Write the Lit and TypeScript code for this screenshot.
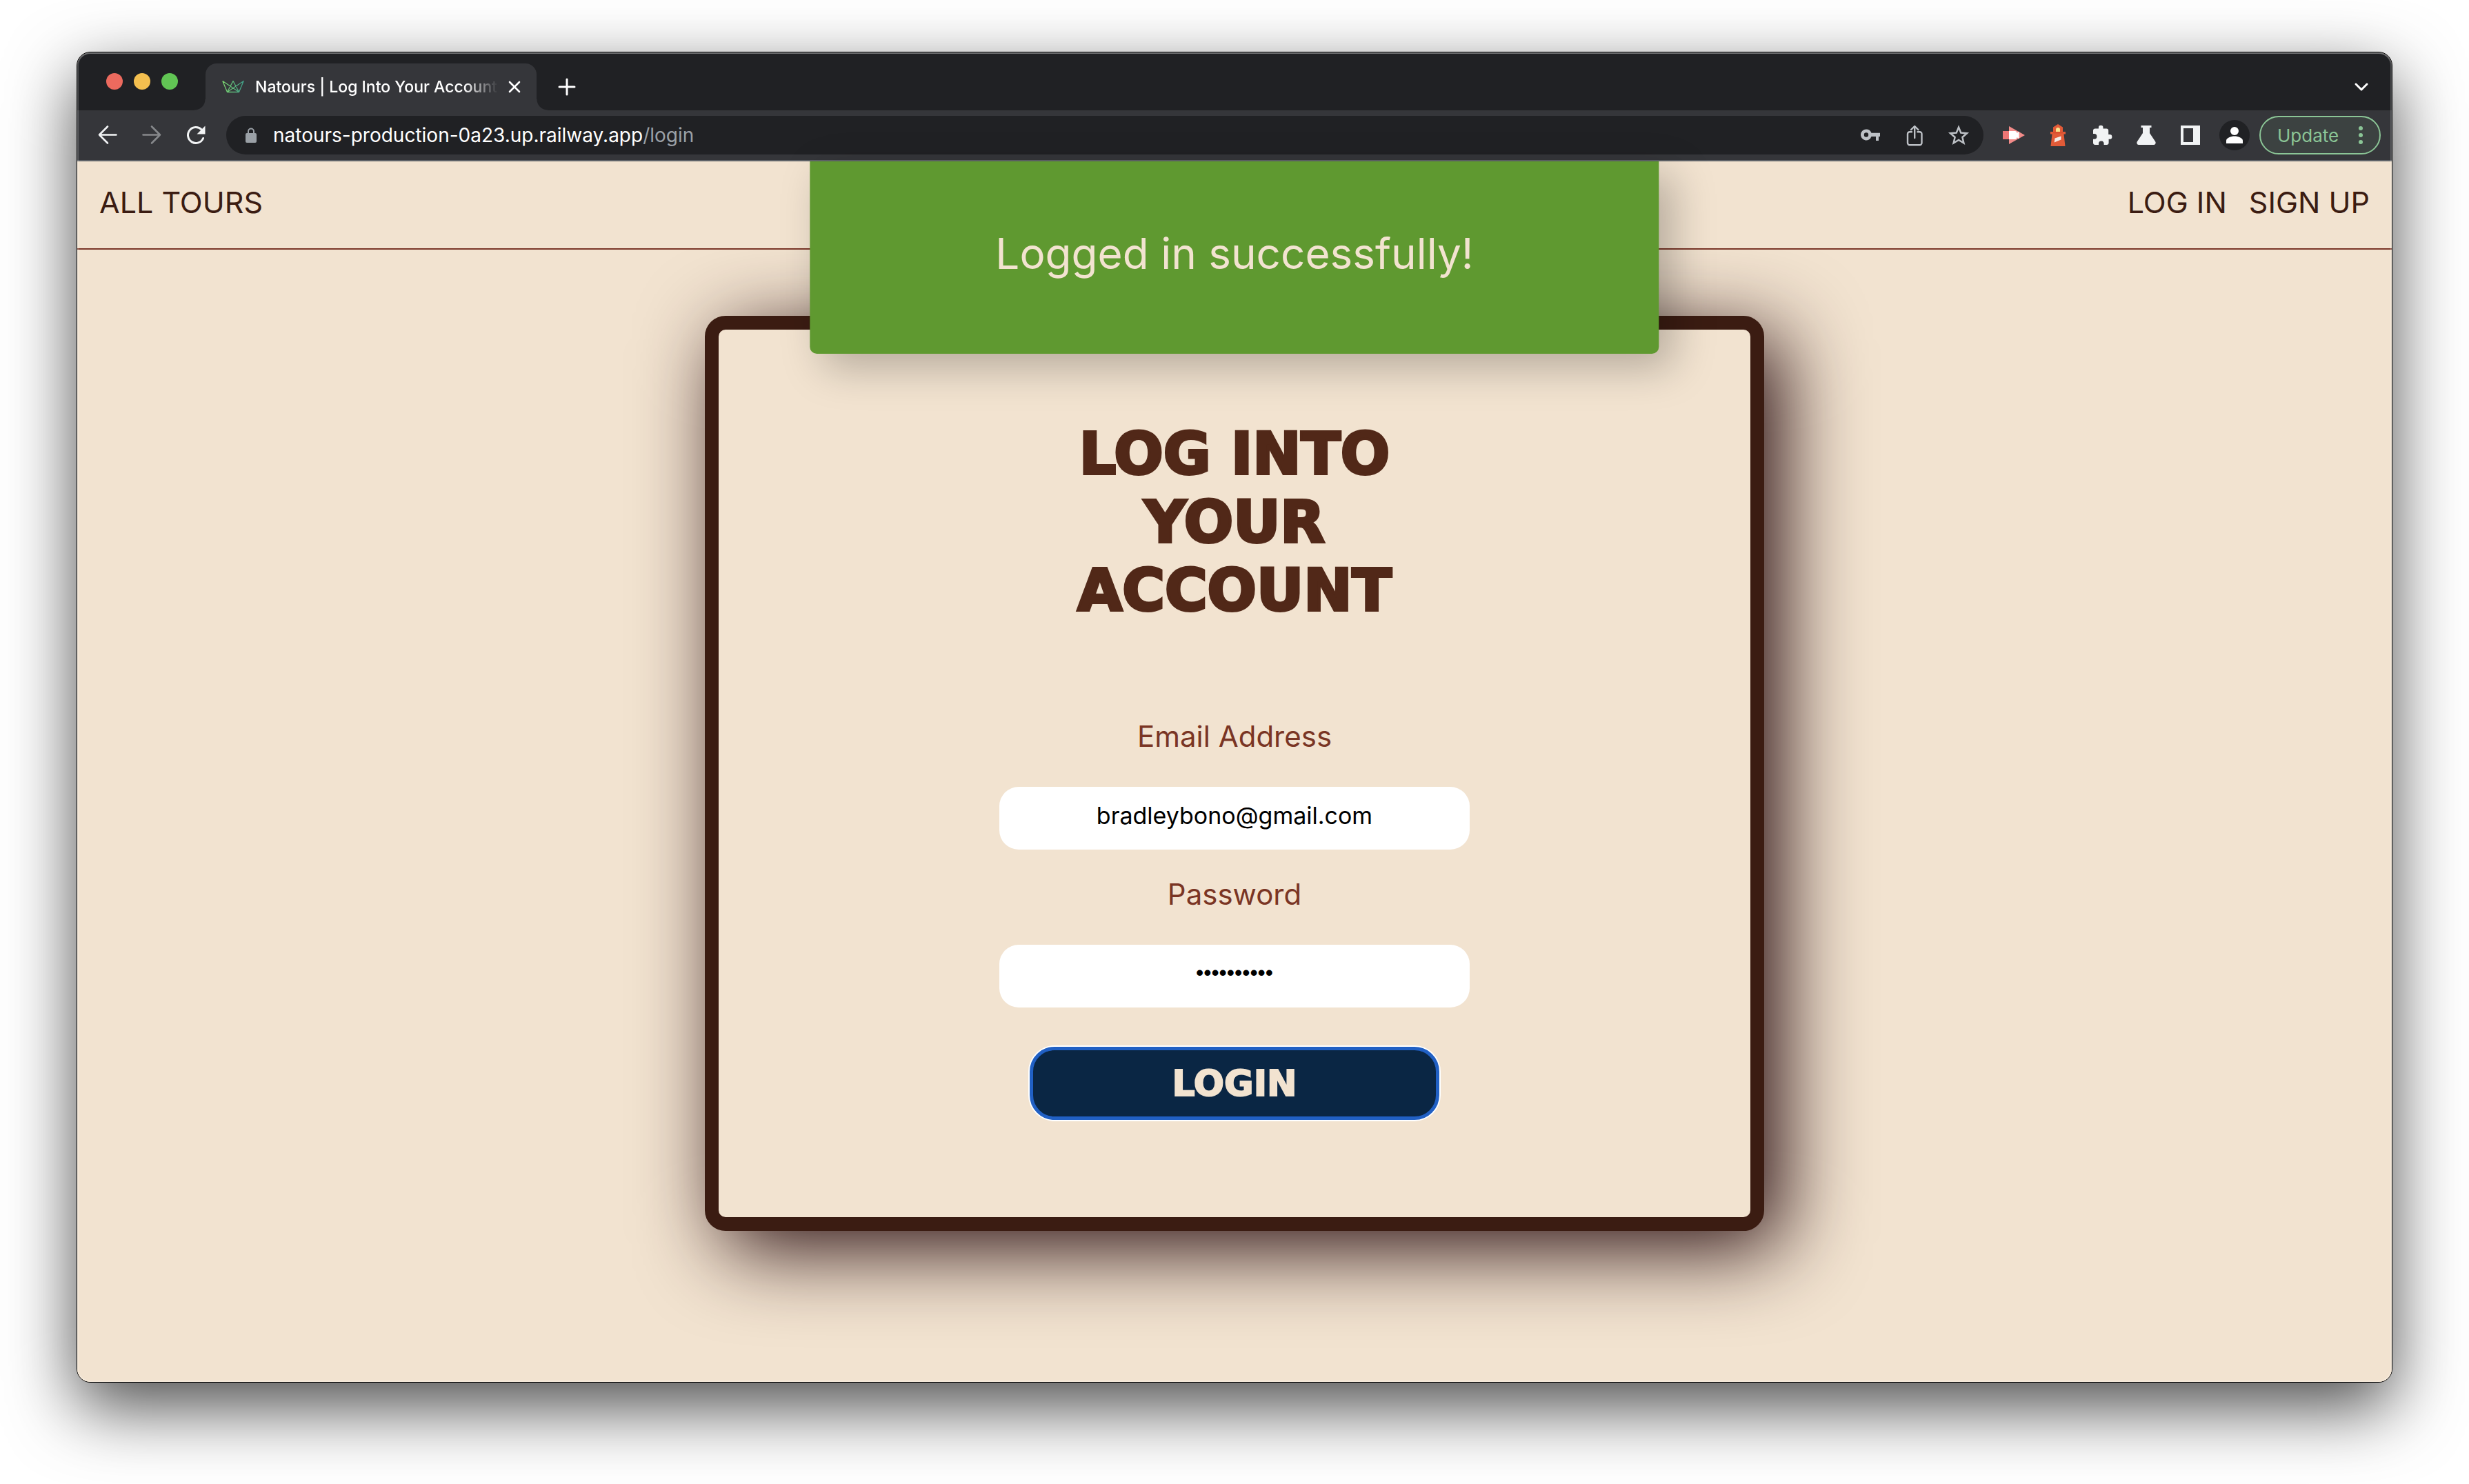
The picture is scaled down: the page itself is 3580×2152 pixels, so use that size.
import { LitElement, html, svg, css } from "lit";
import { customElement, state } from "lit/decorators.js";

const icons = {
  back: svg`<path d="M28.500 15.500H4M16 3.500 4 15.500l12 12" fill="none" stroke="#f1f3f4" stroke-width="2.600" stroke-linecap="round" stroke-linejoin="round"/>`,
  forward: svg`<path d="M3.500 15.500H28M16 3.500l12 12-12 12" fill="none" stroke="#86888b" stroke-width="2.600" stroke-linecap="round" stroke-linejoin="round"/>`,
  reload: svg`<path d="M26.600 20.500A11.500 11.500 0 1 1 24.300 8" fill="none" stroke="#f1f3f4" stroke-width="3" stroke-linecap="round"/><path d="M29.500 2.500v12h-12z" fill="#f1f3f4"/>`,
  key: svg`<path fill-rule="evenodd" d="M10 7.500a8 8 0 0 1 7.500 5.200H30v5.400h-2V24h-4v-5.900h-6.500A8 8 0 1 1 10 7.500zm0 4.800a3.200 3.200 0 1 0 0 6.400 3.200 3.200 0 0 0 0-6.400z" fill="#bdc1c6"/>`,
  share: svg`<path d="M12 11.200H9a3 3 0 0 0-3 3v13a3 3 0 0 0 3 3h14.500a3 3 0 0 0 3-3v-13a3 3 0 0 0-3-3h-3M16.200 20V3.500M11 8.200l5.200-5.200 5.200 5.200" fill="none" stroke="#bdc1c6" stroke-width="2.400" stroke-linecap="round" stroke-linejoin="round"/>`,
  star: svg`<path d="M16 4.500l3.300 8.100 8.700.7-6.600 5.700 2 8.500-7.400-4.500-7.400 4.500 2-8.500L4 13.300l8.700-.7z" fill="none" stroke="#bdc1c6" stroke-width="2.500"/>`,
  recorder: svg`<path d="M0 10h9V3l23 13L9 29v-7H0z" fill="#f28b89"/><path d="M9 10h8.500a3 3 0 0 1 3 3l3-2.500v11l-3-2.500a3 3 0 0 1-3 3H9z" fill="#fff"/><path d="M0 10h9v12H0z" fill="#ee7675"/>`,
  lighthouse: svg`<path d="M16 0l7 4.500V11h4v3.500h-2.500L26.500 32h-21l2-17.500H5V11h4V4.500z" fill="#e25b38"/><path d="M13 11V8a3 3 0 0 1 6 0v3z" fill="#fbe58c"/><path d="M11.500 20.500l9-3v5l-9.800 4z" fill="#f4ece7"/><path d="M8.600 11h14.800v2.500H8.600z" fill="#d9502f"/>`,
  puzzle: svg`<path d="M27 15h-1.800V9.500a3 3 0 0 0-3-3h-4.700V5a3.300 3.300 0 0 0-6.600 0v1.500H6a3 3 0 0 0-3 3v4.600h1.600a3.800 3.800 0 0 1 0 7.600H3V27a3 3 0 0 0 3 3h5v-1.600a3.800 3.800 0 0 1 7.600 0V30h4a3 3 0 0 0 3-3v-5.200H27A3.400 3.400 0 0 0 27 15z" fill="#f1f3f4"/>`,
  flask: svg`<path d="M8.500 2h15v3h-2.500v8l8.300 12.500a3 3 0 0 1-2.500 4.500H5.200a3 3 0 0 1-2.500-4.500L11 13V5H8.500z" fill="#f1f3f4"/>`,
  panel: svg`<path fill-rule="evenodd" d="M2 2h28v28H2zm4 4v20h14V6z" fill="#f1f3f4"/>`,
  chevron: svg`<path d="M8 12l8 8 8-8" fill="none" stroke="#fff" stroke-width="3" stroke-linecap="round" stroke-linejoin="round"/>`,
  close: svg`<path d="M9 9l14 14M23 9L9 23" stroke="#fff" stroke-width="2.600" stroke-linecap="round"/>`,
  plus: svg`<path d="M16 5v22M5 16h22" stroke="#fff" stroke-width="3" stroke-linecap="round"/>`,
};

const icon = (name: keyof typeof icons) =>
  html`<svg class="icon" viewBox="0 0 32 32" aria-hidden="true">${icons[name]}</svg>`;

const iconButton = (name: keyof typeof icons, label: string) =>
  html`<button class="cell" type="button" aria-label=${label}>${icon(name)}</button>`;

const reset = css`
  *,
  *::before,
  *::after {
    box-sizing: border-box;
  }
  button {
    margin: 0;
    padding: 0;
    border: 0;
    background: none;
    color: inherit;
    font: inherit;
    cursor: pointer;
  }
  .icon {
    display: block;
    width: 32px;
    height: 32px;
    overflow: visible;
  }
  .cell {
    display: grid;
    place-items: center;
    flex: none;
    width: 64px;
    height: 56px;
  }
`;

@customElement("browser-bar")
export class BrowserBar extends LitElement {
  static styles = [
    reset,
    css`
      :host {
        display: block;
        background: #35363a;
        border-bottom: 2px solid #5f6368;
        color: #fff;
        font-family: Inter, "Liberation Sans", sans-serif;
        font-weight: 400;
      }
      .tabs {
        display: flex;
        align-items: flex-end;
        height: 84px;
        padding: 0 12px 0 42px;
        background: #202124;
      }
      .lights {
        display: flex;
        align-self: center;
        gap: 16px;
        margin-right: 40px;
      }
      .light {
        width: 24px;
        height: 24px;
        border-radius: 50%;
        background: #ec6a5e;
      }
      .light.min {
        background: #f4bf4f;
      }
      .light.max {
        background: #61c554;
      }
      .tab {
        position: relative;
        display: flex;
        align-items: center;
        width: 480px;
        height: 68px;
        padding: 0 16px 0 24px;
        border-radius: 16px 16px 0 0;
        background: #35363a;
        font-size: 23px;
        font-weight: 500;
      }
      .tab::before,
      .tab::after {
        content: "";
        position: absolute;
        bottom: 0;
        width: 16px;
        height: 16px;
      }
      .tab::before {
        right: 100%;
        background: radial-gradient(circle at 0 0, #202124 15px, #35363a 16px);
      }
      .tab::after {
        left: 100%;
        background: radial-gradient(circle at 100% 0, #202124 15px, #35363a 16px);
      }
      .favicon {
        flex: none;
        width: 32px;
        height: 20px;
        margin-right: 16px;
        overflow: visible;
      }
      .title {
        flex: 1;
        min-width: 0;
        overflow: hidden;
        white-space: nowrap;
        line-height: 32px;
        -webkit-mask-image: linear-gradient(90deg, #000 86%, transparent 100%);
        mask-image: linear-gradient(90deg, #000 86%, transparent 100%);
      }
      .close {
        display: grid;
        place-items: center;
        width: 32px;
        height: 32px;
        margin-left: 8px;
      }
      .tabs .cell {
        height: 68px;
        margin-left: 12px;
      }
      .tabs .cell.search {
        margin-left: auto;
      }
      .tools {
        display: flex;
        align-items: center;
        height: 72px;
        padding: 0 16px 0 12px;
        font-size: 28px;
      }
      .omnibox {
        display: flex;
        align-items: center;
        flex: 1;
        min-width: 0;
        height: 56px;
        margin: 0 12px;
        padding: 0 4px 0 28px;
        border-radius: 28px;
        background: #202124;
      }
      .lock {
        flex: none;
        width: 16px;
        height: 24px;
        margin-right: 24px;
      }
      .url {
        flex: 1;
        min-width: 0;
        overflow: hidden;
        white-space: nowrap;
        line-height: 40px;
      }
      .path {
        color: #9aa0a6;
      }
      .avatar {
        width: 44px;
        height: 44px;
      }
      .update {
        display: flex;
        align-items: center;
        justify-content: space-between;
        width: 176px;
        height: 56px;
        margin-left: 4px;
        padding: 0 24px;
        border: 2px solid #8bc596;
        border-radius: 28px;
        background: #3c4241;
        color: #8bc596;
        font-size: 26px;
      }
      .dots {
        width: 6px;
        height: 26px;
      }
    `,
  ];

  render() {
    return html`
      <div class="tabs">
        <div class="lights">
          <span class="light"></span><span class="light min"></span><span class="light max"></span>
        </div>
        <div class="tab">
          <svg class="favicon" viewBox="0 0 32 20" aria-hidden="true">
            <defs>
              <linearGradient id="crown" x1="0" x2="1">
                <stop offset="0" stop-color="#7dd56f" />
                <stop offset="1" stop-color="#3f9c87" />
              </linearGradient>
            </defs>
            <path
              d="M.8 1.500 7.500 17.500h17L31.200 1.500 7.500 17.500 16 1.500l8.500 16L.8 1.500"
              fill="none"
              stroke="url(#crown)"
              stroke-width="1.300"
              stroke-linejoin="round"
            />
          </svg>
          <span class="title">Natours | Log Into Your Account</span>
          <button class="close" type="button" aria-label="Close tab">${icon("close")}</button>
        </div>
        ${iconButton("plus", "New tab")}
        <button class="cell search" type="button" aria-label="Search tabs">${icon("chevron")}</button>
      </div>
      <div class="tools">
        ${iconButton("back", "Back")} ${iconButton("forward", "Forward")} ${iconButton("reload", "Reload")}
        <div class="omnibox">
          <svg class="lock" viewBox="0 0 16 24" aria-hidden="true">
            <rect y="9" width="16" height="14" rx="2" fill="#9aa0a6" />
            <path d="M4 9V6.500a4 4 0 0 1 8 0V9" fill="none" stroke="#9aa0a6" stroke-width="2" />
          </svg>
          <span class="url">natours-production-0a23.up.railway.app<span class="path">/login</span></span>
          ${iconButton("key", "Passwords")} ${iconButton("share", "Share")} ${iconButton("star", "Bookmark")}
        </div>
        ${iconButton("recorder", "Recorder")} ${iconButton("lighthouse", "Lighthouse")}
        ${iconButton("puzzle", "Extensions")} ${iconButton("flask", "Labs")} ${iconButton("panel", "Side panel")}
        <button class="cell" type="button" aria-label="Profile">
          <svg class="avatar" viewBox="0 0 44 44" aria-hidden="true">
            <circle cx="22" cy="22" r="22" fill="#202124" />
            <circle cx="22" cy="16" r="6" fill="#fff" />
            <path d="M10 34v-4c0-4 7-6.500 12-6.500S34 26 34 30v4z" fill="#fff" />
          </svg>
        </button>
        <button class="update" type="button">
          Update
          <svg class="dots" viewBox="0 0 6 26" aria-hidden="true">
            <g fill="#8bc596">
              <circle cx="3" cy="3" r="3" />
              <circle cx="3" cy="13" r="3" />
              <circle cx="3" cy="23" r="3" />
            </g>
          </svg>
        </button>
      </div>
    `;
  }
}

@customElement("login-page")
export class LoginPage extends LitElement {
  @state() private email = "bradleybono@gmail.com";
  @state() private password = "pass123456";

  static styles = [
    reset,
    css`
      :host {
        position: relative;
        display: flex;
        flex-direction: column;
        background: #f2e3d0;
        color: #3b1c12;
        font-family: Inter, "Liberation Sans", sans-serif;
        font-size: 43px;
        line-height: 52px;
      }
      .header {
        position: relative;
        z-index: 1;
        display: flex;
        justify-content: space-between;
        padding: 33px 32px 41px;
        border-bottom: 2px solid #7a3527;
        background: #f2e3d0;
        text-transform: uppercase;
      }
      .group {
        display: flex;
        gap: 32px;
      }
      a {
        color: inherit;
        text-decoration: none;
      }
      .alert {
        position: absolute;
        z-index: 2;
        top: 0;
        left: 50%;
        transform: translateX(-50%);
        padding: 94px 269px 105px;
        border-radius: 0 0 10px 10px;
        background: #5f9930;
        box-shadow: 20px 20px 60px rgba(0, 0, 0, 0.25);
        color: #f2e3d0;
        font-size: 62px;
        line-height: 80px;
        white-space: nowrap;
      }
      .main {
        display: flex;
        justify-content: center;
        padding: 96px 32px;
      }
      .card {
        display: flex;
        flex-direction: column;
        align-items: center;
        width: 1536px;
        padding: 131px 32px 141px;
        border: 20px solid #3b1c12;
        border-radius: 30px;
        background: #f2e3d0;
        box-shadow: 26px 26px 120px #2a0f12;
        text-align: center;
      }
      .heading {
        max-width: 600px;
        margin: 0 0 136px;
        color: #512818;
        font-family: "DejaVu Sans", Inter, sans-serif;
        font-size: 84px;
        font-weight: 700;
        line-height: 99px;
        text-transform: uppercase;
        -webkit-text-stroke: 4px #512818;
      }
      .form {
        display: flex;
        flex-direction: column;
        align-items: center;
        width: 682px;
        max-width: 100%;
      }
      .label {
        margin-bottom: 47px;
        color: #7a3524;
        font-size: 42px;
      }
      .input {
        width: 100%;
        height: 91px;
        margin: 0 0 39px;
        padding: 0 32px 8px;
        border: 0;
        border-radius: 28px;
        outline: 0;
        background: #fff;
        color: #000;
        font-family: inherit;
        font-size: 34px;
        text-align: center;
      }
      .input.secret {
        margin-bottom: 57px;
        padding-bottom: 10px;
        font-family: "Liberation Sans", sans-serif;
        font-size: 32px;
      }
      .submit {
        width: 594px;
        max-width: 100%;
        height: 106px;
        border: 5px solid #2160c4;
        border-radius: 36px;
        background: #0a2644;
        box-shadow: 0 0 0 2px #fff;
        color: #f2e3d0;
        font-family: "DejaVu Sans", Inter, sans-serif;
        font-size: 52px;
        font-weight: 700;
        text-transform: uppercase;
        -webkit-text-stroke: 2px #f2e3d0;
      }
    `,
  ];

  render() {
    return html`
      <header class="header">
        <nav class="group"><a href="#tours">All tours</a></nav>
        <nav class="group"><a href="#login">Log in</a><a href="#signup">Sign up</a></nav>
      </header>
      <div class="alert" role="status">Logged in successfully!</div>
      <main class="main">
        <section class="card">
          <h1 class="heading">Log into your account</h1>
          <form class="form" @submit=${(e: Event) => e.preventDefault()}>
            <label class="label" for="email">Email Address</label>
            <input
              class="input"
              id="email"
              type="email"
              .value=${this.email}
              @input=${(e: InputEvent) => (this.email = (e.target as HTMLInputElement).value)}
            />
            <label class="label" for="password">Password</label>
            <input
              class="input secret"
              id="password"
              type="password"
              .value=${this.password}
              @input=${(e: InputEvent) => (this.password = (e.target as HTMLInputElement).value)}
            />
            <button class="submit" type="submit">Login</button>
          </form>
        </section>
      </main>
    `;
  }
}

@customElement("app-root")
export class AppRoot extends LitElement {
  static styles = css`
    :host {
      box-sizing: border-box;
      display: flex;
      min-height: 100vh;
      padding: 75px 111px 147px;
      background: #fff;
    }
    .window {
      position: relative;
      display: flex;
      flex: 1;
      flex-direction: column;
      min-width: 0;
      overflow: hidden;
      border: 1px solid #000;
      border-radius: 20px;
      background: #f2e3d0;
      box-shadow: 0 36px 100px rgba(0, 0, 0, 0.7);
    }
    .window::after {
      content: "";
      position: absolute;
      inset: 0;
      border-radius: 19px;
      box-shadow:
        inset 0 0 0 2px rgba(255, 255, 255, 0.2),
        inset 0 2px rgba(255, 255, 255, 0.2);
      pointer-events: none;
      z-index: 3;
    }
    .page {
      flex: 1;
    }
  `;

  render() {
    return html`
      <div class="window">
        <browser-bar></browser-bar>
        <login-page class="page"></login-page>
      </div>
    `;
  }
}
